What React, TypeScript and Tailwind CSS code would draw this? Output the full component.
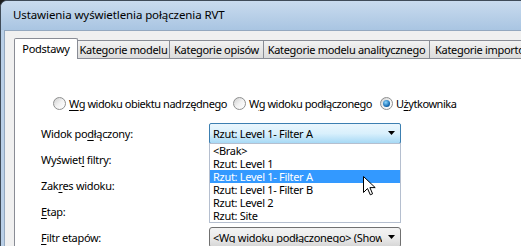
import { ReactNode } from 'react';

const FONT = "font-['Noto_Sans','Open_Sans',sans-serif]";

function U({ children }: { children: ReactNode }) {
  return <span className="underline underline-offset-[2px] decoration-[1px]">{children}</span>;
}

function Radio({ checked, children }: { checked?: boolean; children: ReactNode }) {
  return (
    <div className="flex items-center gap-[3px]">
      <div className="w-[13px] h-[13px] shrink-0 rounded-full border border-[#8e8f8f] bg-gradient-to-br from-[#d0d0d0] via-[#f2f2f2] to-[#ffffff] flex items-center justify-center">
        {checked && <div className="w-[7px] h-[7px] rounded-full bg-[radial-gradient(circle_at_40%_35%,#8ad6ff,#0a5fa8_70%,#123456)]" />}
      </div>
      <span className="whitespace-nowrap tracking-[-0.45px]">{children}</span>
    </div>
  );
}

function Arrow() {
  return (
    <svg width="7" height="4" viewBox="0 0 7 4"><path d="M0 0h7L3.5 4z" fill="#000" /></svg>
  );
}

function Tab({ w, active, children, left }: { w: string; active?: boolean; children: ReactNode; left?: boolean }) {
  if (active)
    return (
      <div className={`${w} shrink-0 h-[21px] -mb-[1px] relative z-10 bg-white border border-b-0 border-[#898c95] rounded-t-[2px] flex items-center justify-center pb-[2px] whitespace-nowrap`}>
        {children}
      </div>
    );
  return (
    <div className={`${w} shrink-0 h-[18px] border border-b-0 border-l-0 border-[#898c95] bg-gradient-to-b from-[#f2f2f2] to-[#dcdcdc] flex items-center ${left ? 'justify-start pl-[5px]' : 'justify-center'} whitespace-nowrap overflow-hidden`}>
      {children}
    </div>
  );
}

const items = ['<Brak>', 'Rzut: Level 1', 'Rzut: Level 1- Filter A', 'Rzut: Level 1- Filter B', 'Rzut: Level 2', 'Rzut: Site'];

export default function App() {
  return (
    <div className={`w-[521px] h-[246px] overflow-hidden bg-[#1c1c1c] text-[11px] tracking-[-0.3px] leading-none text-black ${FONT}`}>
      <div className="w-[530px] h-[260px] rounded-tl-[7px] border-l border-t border-[#3f4b58] bg-[#bcd1e8] flex flex-col overflow-hidden">
        <div className="h-[29px] shrink-0 bg-gradient-to-b from-[#c9dbee] to-[#a9c5e2] flex items-center pl-[12px] pb-[1px] text-[11.5px] tracking-[-0.1px]">
          Ustawienia wyświetlenia połączenia RVT
        </div>
        <div className="flex flex-1">
          <div className="w-[3px] shrink-0 bg-[#b9cfe7]" />
          <div className="flex-1 min-w-0 border-l border-t border-[#94a8bf] bg-[#f0f0f0] pl-[9px] pt-[7px]">
            <div className="flex items-end h-[20px]">
              <Tab w="w-[64px]" active>Podstawy</Tab>
              <Tab w="w-[92px]">Kategorie modelu</Tab>
              <Tab w="w-[94px]">Kategorie opisów</Tab>
              <Tab w="w-[166px]">Kategorie modelu analitycznego</Tab>
              <Tab w="w-[110px]" left>Kategorie importowanych</Tab>
            </div>
            <div className="relative h-[200px] bg-white border-l border-t border-[#898c95] pl-[38px] pt-[37px]">
              <div className="flex items-center h-[14px]">
                <div className="w-[180px] shrink-0"><Radio><U>W</U>g widoku obiektu nadrzędnego</Radio></div>
                <div className="w-[147px] shrink-0"><Radio>W<U>g</U> widoku podłączonego</Radio></div>
                <Radio checked>U<U>ż</U>ytkownika</Radio>
              </div>
              <div className="-ml-[12px] mt-[10px] flex flex-col">
                <div className="flex items-center h-[26px]">
                  <div className="w-[168px] shrink-0">Widok po<U>d</U>łączony:</div>
                  <div className="relative">
                    <div className="w-[192px] h-[21px] rounded-[2px] border border-[#3c7fb1] bg-gradient-to-b from-[#eaf6fd] via-[#d9f0fc] to-[#a7d9f5] flex items-center justify-between pl-[3px] pr-[5px]">
                      <span className="whitespace-nowrap">Rzut: Level 1- Filter A</span>
                      <Arrow />
                    </div>
                    <div className="absolute left-0 top-[20px] w-[192px] h-[80px] bg-white border border-[#b5bfcf] flex flex-col z-20">
                      {items.map((t, i) => (
                        <div key={t} className={`h-[13px] shrink-0 pl-[3px] flex items-center whitespace-nowrap ${i === 2 ? 'bg-[#3399ff] text-white' : ''}`}>{t}</div>
                      ))}
                    </div>
                    <svg className="absolute left-[154px] top-[53px] z-30" width="13" height="20" viewBox="0 0 13 20">
                      <path d="M0.5 0.5V16.5L4.5 12.5L7.3 18.8L9.6 17.8L6.9 11.6H12.2Z" fill="#fff" stroke="#000" strokeWidth="1" strokeLinejoin="miter" />
                    </svg>
                  </div>
                </div>
                <div className="flex items-center h-[26px]">
                  <div className="w-[168px]">Wyświet<U>l</U> filtry:</div>
                </div>
                <div className="flex items-center h-[26px]">
                  <div className="w-[168px]">Zak<U>r</U>es widoku:</div>
                </div>
                <div className="flex items-center h-[26px]">
                  <div className="w-[168px]"><U>E</U>tap:</div>
                </div>
                <div className="flex items-center h-[26px]">
                  <div className="w-[168px] shrink-0"><U>F</U>iltr etapów:</div>
                  <div className="w-[192px] h-[21px] shrink-0 rounded-[3px] border border-[#707070] bg-gradient-to-b from-[#f3f3f3] via-[#ebebeb] to-[#d5d5d5] flex items-center pl-[3px] pr-[5px] overflow-hidden">
                    <span className="flex-1 whitespace-nowrap overflow-hidden">&lt;Wg widoku podłączonego&gt; (Show all)</span>
                    <span className="pl-[6px]"><Arrow /></span>
                  </div>
                </div>
              </div>
            </div>
          </div>
        </div>
      </div>
    </div>
  );
}
